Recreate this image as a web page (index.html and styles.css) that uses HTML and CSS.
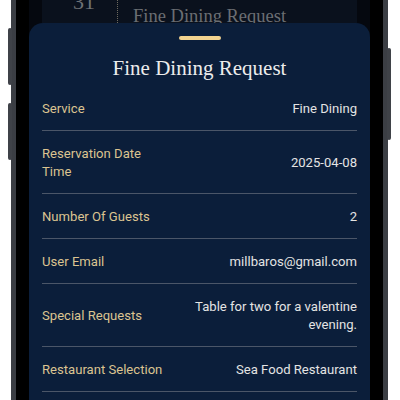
FILE: index.html
```html
<!DOCTYPE html>
<html>
<head>
<meta charset="utf-8">
<link rel="stylesheet" href="styles.css">
</head>
<body>
<div class="stage">
  <div class="phone">
    <span class="btn btn-l1"></span>
    <span class="btn btn-l2"></span>
    <span class="btn btn-r"></span>
    <div class="screen">
      <div class="back-card">
        <div class="day">31</div>
        <div class="dots"></div>
        <div class="back-title">Fine Dining Request</div>
      </div>
      <div class="sheet">
        <div class="handle"></div>
        <h1 class="title">Fine Dining Request</h1>
        <div class="row"><div class="label">Service</div><div class="value">Fine Dining</div></div>
        <div class="row"><div class="label">Reservation Date Time</div><div class="value">2025-04-08</div></div>
        <div class="row"><div class="label">Number Of Guests</div><div class="value">2</div></div>
        <div class="row"><div class="label">User Email</div><div class="value">millbaros@gmail.com</div></div>
        <div class="row"><div class="label">Special Requests</div><div class="value">Table for two for a valentine evening.</div></div>
        <div class="row"><div class="label">Restaurant Selection</div><div class="value">Sea Food Restaurant</div></div>
      </div>
    </div>
  </div>
</div>
</body>
</html>
```

FILE: styles.css
```css
html, body {
  margin: 0;
  padding: 0;
  background: #ffffff;
  overflow: hidden;
}
.stage {
  width: 400px;
  height: 400px;
  padding-left: 11px;
  box-sizing: border-box;
  overflow: hidden;
}
.phone {
  position: relative;
  width: 377px;
  height: 520px;
  margin-top: -60px;
  box-sizing: border-box;
  border: 5px solid #3b3e44;
  border-radius: 40px;
  background: #000;
  padding: 0 13px;
}
.btn {
  position: absolute;
  width: 4px;
  background: #3f4248;
  border-radius: 2px;
}
.btn-l1 { left: -8px; top: 83px; height: 57px; }
.btn-l2 { left: -8px; top: 158px; height: 57px; }
.btn-r { right: -8px; top: 103px; height: 92px; }
.screen {
  height: 100%;
  background: #05080f;
  overflow: hidden;
  padding-top: 55px;
  box-sizing: border-box;
}
.back-card {
  height: 23px;
  margin: 0 13px;
  background: #0a111d;
  display: flex;
  align-items: flex-end;
  position: relative;
  overflow: hidden;
}
.day {
  font-family: "Liberation Serif", serif;
  font-size: 22px;
  color: #6e7176;
  width: 60px;
  margin-left: 31px;
  align-self: flex-start;
  margin-top: -10px;
  line-height: 24px;
}
.dots {
  width: 0;
  height: 23px;
  border-left: 1px dotted #6e6a5e;
  margin-left: -16px;
}
.back-title {
  font-family: "Liberation Serif", serif;
  font-size: 18.5px;
  color: #6b6e73;
  margin-left: 15px;
  line-height: 20px;
  margin-bottom: -3px;
}
.sheet {
  background: #0b1e3a;
  border-radius: 14px 14px 0 0;
  padding: 13px 13px 0;
  height: 460px;
}
.handle {
  width: 42px;
  height: 4px;
  border-radius: 2px;
  background: #f2d38f;
  margin: 0 auto;
}
.title {
  margin: 0;
  padding-top: 14px;
  height: 32px;
  line-height: 28px;
  text-align: center;
  font-family: "Liberation Serif", serif;
  font-weight: normal;
  font-size: 21px;
  color: #ececec;
}
.row {
  display: flex;
  align-items: center;
  justify-content: space-between;
  padding: 14px 0 12px;
  border-bottom: 1px solid #4b5668;
  font-family: Roboto, "Liberation Sans", sans-serif;
  font-size: 13.1px;
  line-height: 18px;
}
.label {
  flex: 2;
  color: #dcc491;
}
.value {
  flex: 3;
  text-align: right;
  color: #e4e4e4;
}
```
